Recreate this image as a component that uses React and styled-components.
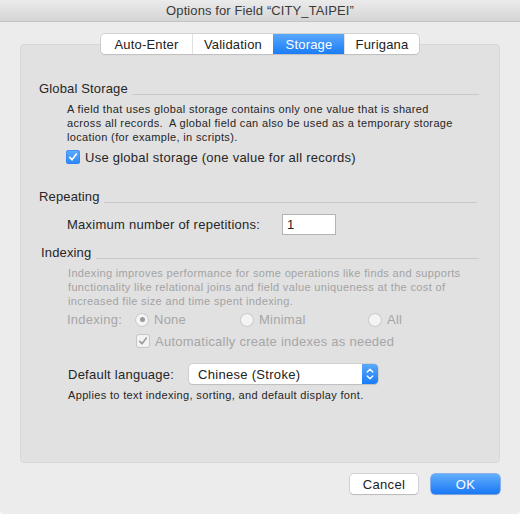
import React from "react";
import styled, { createGlobalStyle, css } from "styled-components";

const Global = createGlobalStyle`
  html, body { margin: 0; padding: 0; background: #f6f6f6; }
  body { font-family: "Liberation Sans", Arial, sans-serif; color: #262626; }
  * { box-sizing: border-box; }
`;

const Window = styled.div`
  width: 520px;
  height: 514px;
  background: #ececec;
  border-radius: 0 0 5px 5px;
  overflow: hidden;
  display: flex;
  flex-direction: column;
`;

const TitleBar = styled.div`
  height: 22px;
  flex: none;
  background: linear-gradient(#ebebeb, #d5d5d5);
  border-bottom: 1px solid #c4c4c4;
  display: flex;
  align-items: center;
  justify-content: center;
  font-size: 13px;
  color: #3a3a3a;
  letter-spacing: 0.1px;
`;

const Content = styled.div`
  flex: 1;
  display: flex;
  flex-direction: column;
  padding: 12px 20px 0;
`;

const TabBar = styled.div`
  position: relative;
  z-index: 1;
  align-self: center;
  display: flex;
  height: 20px;
  background: #fff;
  border-radius: 4px;
  box-shadow: 0 0 0 0.5px #b9b9b9, 0 1px 1px rgba(0, 0, 0, 0.12);
  overflow: hidden;
`;

const Tab = styled.div`
  height: 20px;
  width: ${(p) => p.$w}px;
  display: flex;
  align-items: center;
  justify-content: center;
  font-size: 13px;
  letter-spacing: 0.2px;
  color: #222;
  border-left: ${(p) => (p.$first ? "none" : "1px solid #e0e0e0")};
  ${(p) =>
    p.$active &&
    css`
      background: linear-gradient(#5aa8fb, #1a7cf6);
      color: #fff;
      border-left-color: transparent;
    `}
`;

const GroupBox = styled.div`
  flex: 1;
  margin-top: -10px;
  background: #e1e1e1;
  border: 1px solid #d8d8d8;
  border-radius: 4px;
  padding: 36px 20px 0 18px;
  display: flex;
  flex-direction: column;
`;

const SectionHeader = styled.div`
  display: flex;
  height: 16px;
  margin-top: ${(p) => p.$mt || 0}px;
  padding-left: ${(p) => p.$indent || 0}px;
  padding-right: ${(p) => p.$right || 0}px;
`;

const SectionTitle = styled.span`
  font-size: 13px;
  line-height: 16px;
  letter-spacing: 0.15px;
  color: #262626;
`;

const Rule = styled.div`
  flex: 1;
  align-self: flex-end;
  height: 1px;
  margin: 0 0 2px ${(p) => p.$gap || 4}px;
  background: #c9c9c9;
`;

const Description = styled.p`
  margin: ${(p) => p.$mt || 5}px 0 0 ${(p) => p.$indent || 28}px;
  font-size: 11px;
  line-height: 14px;
  letter-spacing: 0.35px;
  color: ${(p) => (p.$disabled ? "#a3a3a3" : "#262626")};
`;

const CheckRow = styled.label`
  display: flex;
  align-items: center;
  height: 16px;
  margin: ${(p) => p.$mt}px 0 0 ${(p) => p.$indent}px;
  font-size: 13px;
  letter-spacing: 0.25px;
  color: ${(p) => (p.$disabled ? "#a6a6a6" : "#262626")};
`;

const Box = styled.span`
  width: 14px;
  height: 14px;
  flex: none;
  margin-right: 5px;
  border-radius: 3px;
  display: flex;
  align-items: center;
  justify-content: center;
  ${(p) =>
    p.$disabled
      ? css`
          background: #f3f3f3;
          box-shadow: inset 0 0 0 1px #c6c6c6;
        `
      : css`
          background: linear-gradient(#5fabfc, #2a88f8);
          box-shadow: inset 0 0 0 0.5px #2b7ce8;
        `}
`;

const FieldRow = styled.div`
  display: grid;
  grid-template-columns: ${(p) => p.$cols};
  align-items: center;
  margin: ${(p) => p.$mt}px 0 0 ${(p) => p.$indent || 28}px;
  font-size: 13px;
  letter-spacing: 0.25px;
  color: ${(p) => (p.$disabled ? "#a6a6a6" : "#262626")};
`;

const NumberInput = styled.div`
  width: 54px;
  height: 21px;
  background: #fff;
  border: 1px solid #b3b3b3;
  font-size: 13px;
  padding-left: 4px;
  line-height: 19px;
  color: #222;
`;

const RadioOption = styled.span`
  display: flex;
  align-items: center;
`;

const RadioDot = styled.span`
  width: 14px;
  height: 14px;
  border-radius: 50%;
  background: #f4f4f4;
  box-shadow: inset 0 0 0 1px #c8c8c8;
  margin-right: 5px;
  display: flex;
  align-items: center;
  justify-content: center;
  &::after {
    content: "";
    width: 5px;
    height: 5px;
    border-radius: 50%;
    background: ${(p) => (p.$on ? "#9a9a9a" : "transparent")};
  }
`;

const Select = styled.div`
  width: 189px;
  height: 20px;
  background: #fff;
  border-radius: 4px;
  box-shadow: 0 0 0 0.5px #bdbdbd, 0 1px 1px rgba(0, 0, 0, 0.15);
  display: flex;
  align-items: center;
  overflow: hidden;
`;

const SelectText = styled.span`
  flex: 1;
  padding-left: 9px;
  font-size: 13px;
  letter-spacing: 0.3px;
  color: #222;
`;

const SelectArrows = styled.span`
  width: 16px;
  height: 20px;
  background: linear-gradient(#5aa8fb, #1a7cf6);
  display: flex;
  align-items: center;
  justify-content: center;
`;

const Footer = styled.div`
  display: flex;
  justify-content: flex-end;
  gap: 13px;
  padding: 11px 20px 20px;
`;

const Button = styled.div`
  width: ${(p) => p.$w}px;
  height: 20px;
  border-radius: 4px;
  display: flex;
  align-items: center;
  justify-content: center;
  font-size: 13px;
  letter-spacing: 0.3px;
  ${(p) =>
    p.$primary
      ? css`
          background: linear-gradient(#62aefc, #1a78f5);
          color: #fff;
          box-shadow: 0 0 0 0.5px #2a7ae6, 0 1px 1px rgba(0, 0, 0, 0.15);
        `
      : css`
          background: #fff;
          color: #222;
          box-shadow: 0 0 0 0.5px #b5b5b5, 0 1px 1px rgba(0, 0, 0, 0.18);
        `}
`;

const Check = ({ color }) => (
  <svg width="10" height="10" viewBox="0 0 10 10">
    <path d="M1.8 5.4 L4 7.8 L8.4 2" fill="none" stroke={color} strokeWidth="1.6" strokeLinecap="round" strokeLinejoin="round" />
  </svg>
);

const Chevrons = () => (
  <svg width="8" height="14" viewBox="0 0 8 14">
    <path d="M1.2 5 L4 2.2 L6.8 5 M1.2 9 L4 11.8 L6.8 9" fill="none" stroke="#fff" strokeWidth="1.3" strokeLinecap="round" strokeLinejoin="round" />
  </svg>
);

export default function App() {
  return (
    <>
      <Global />
      <Window>
        <TitleBar>Options for Field “CITY_TAIPEI”</TitleBar>
        <Content>
          <TabBar>
            <Tab $w={91} $first>Auto-Enter</Tab>
            <Tab $w={81}>Validation</Tab>
            <Tab $w={71} $active>Storage</Tab>
            <Tab $w={75}>Furigana</Tab>
          </TabBar>
          <GroupBox>
            <SectionHeader>
              <SectionTitle>Global Storage</SectionTitle>
              <Rule />
            </SectionHeader>
            <Description>
              A field that uses global storage contains only one value that is shared
              <br />
              across all records.&nbsp; A global field can also be used as a temporary storage
              <br />
              location (for example, in scripts).
            </Description>
            <CheckRow $mt={5} $indent={27}>
              <Box>
                <Check color="#fff" />
              </Box>
              Use global storage (one value for all records)
            </CheckRow>

            <SectionHeader $mt={24} $right={2}>
              <SectionTitle>Repeating</SectionTitle>
              <Rule />
            </SectionHeader>
            <FieldRow $mt={9} $cols="215px auto">
              <span>Maximum number of repetitions:</span>
              <NumberInput>1</NumberInput>
            </FieldRow>

            <SectionHeader $mt={10} $indent={2}>
              <SectionTitle>Indexing</SectionTitle>
              <Rule $gap={5} />
            </SectionHeader>
            <Description $disabled $indent={29}>
              Indexing improves performance for some operations like finds and supports
              <br />
              functionality like relational joins and field value uniqueness at the cost of
              <br />
              increased file size and time spent indexing.
            </Description>
            <FieldRow $mt={4} $cols="68px 105px 128px auto" $disabled>
              <span>Indexing:</span>
              <RadioOption>
                <RadioDot $on />
                None
              </RadioOption>
              <RadioOption>
                <RadioDot />
                Minimal
              </RadioOption>
              <RadioOption>
                <RadioDot />
                All
              </RadioOption>
            </FieldRow>
            <CheckRow $mt={6} $indent={97} $disabled>
              <Box $disabled>
                <Check color="#9c9c9c" />
              </Box>
              Automatically create indexes as needed
            </CheckRow>

            <FieldRow $mt={15} $cols="121px auto" $indent={29}>
              <span>Default language:</span>
              <Select>
                <SelectText>Chinese (Stroke)</SelectText>
                <SelectArrows>
                  <Chevrons />
                </SelectArrows>
              </Select>
            </FieldRow>
            <Description $mt={4} $indent={29}>
              Applies to text indexing, sorting, and default display font.
            </Description>
          </GroupBox>
        </Content>
        <Footer>
          <Button $w={68}>Cancel</Button>
          <Button $w={69} $primary>OK</Button>
        </Footer>
      </Window>
    </>
  );
}
